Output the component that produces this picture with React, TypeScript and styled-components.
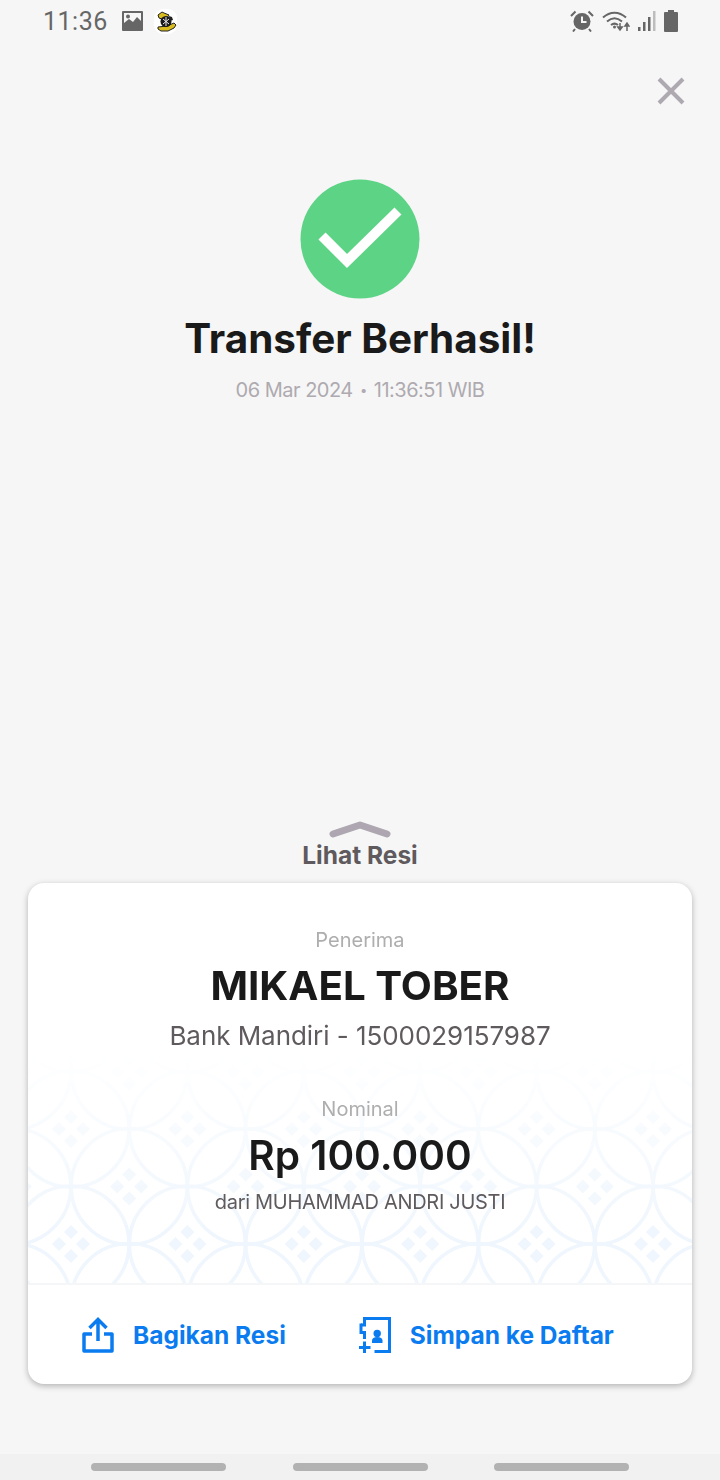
import React from 'react';
import styled, { createGlobalStyle } from 'styled-components';

const GlobalStyle = createGlobalStyle`
  html, body {
    margin: 0;
    padding: 0;
    background: #f6f6f6;
  }
  * {
    box-sizing: border-box;
  }
`;

const FONT = `Inter, "Liberation Sans", sans-serif`;

const Page = styled.div`
  width: 720px;
  height: 1480px;
  display: flex;
  flex-direction: column;
  background: #f6f6f6;
  font-family: ${FONT};
  overflow: hidden;
`;

const StatusBar = styled.div`
  height: 42px;
  flex: none;
  display: flex;
  align-items: center;
  justify-content: space-between;
  padding: 0 42px 0 43px;
`;

const StatusGroup = styled.div<{ $gap: number }>`
  display: flex;
  align-items: center;
  gap: ${(p) => p.$gap}px;
`;

const Clock = styled.span`
  font-family: Roboto, sans-serif;
  font-size: 25px;
  letter-spacing: 0.5px;
  color: #666666;
  margin-right: 3px;
`;

const CloseRow = styled.div`
  flex: none;
  display: flex;
  justify-content: flex-end;
  padding: 34px 34px 0 0;
`;

const Hero = styled.div`
  flex: none;
  display: flex;
  flex-direction: column;
  align-items: center;
  padding-top: 73px;
`;

const Title = styled.h1`
  margin: 16px 0 0;
  font-size: 40.400px;
  line-height: 48px;
  font-weight: 700;
  color: #1a1a1a;
`;

const DateLine = styled.div`
  margin-top: 14px;
  font-size: 20px;
  line-height: 26px;
  letter-spacing: -0.5px;
  color: #aeaab0;
`;

const DateDot = styled.span`
  font-size: 13px;
  vertical-align: 2px;
  margin: 0 2px;
`;

const Spacer = styled.div`
  flex: 1;
`;

const Drawer = styled.div`
  flex: none;
  display: flex;
  flex-direction: column;
  align-items: center;
`;

const DrawerLabel = styled.div`
  margin-top: 1px;
  font-size: 24.500px;
  line-height: 30px;
  font-weight: 700;
  color: #5f5a5d;
`;

const Card = styled.div`
  margin: 13px 28px 70px;
  width: 664px;
  height: 501px;
  display: flex;
  flex-direction: column;
  background: #ffffff;
  border-radius: 16px;
  box-shadow: 0 2px 6px rgba(0, 0, 0, 0.28);
  overflow: hidden;
`;

const CardBody = styled.div`
  position: relative;
  height: 402px;
  flex: none;
  display: flex;
  flex-direction: column;
  align-items: center;
  padding-top: 44px;
  border-bottom: 2px solid #f5f6f7;
`;

const Pattern = styled.svg`
  position: absolute;
  left: 0;
  bottom: 0;
`;

const Content = styled.div`
  position: relative;
  display: flex;
  flex-direction: column;
  align-items: center;
`;

const Caption = styled.div<{ $top?: number }>`
  margin-top: ${(p) => p.$top ?? 0}px;
  font-size: 20px;
  line-height: 26px;
  color: #aeaeae;
`;

const Name = styled.div`
  margin-top: 9px;
  font-size: 40.300px;
  line-height: 48px;
  font-weight: 700;
  color: #1a1a1a;
`;

const Account = styled.div`
  margin-top: 9px;
  font-size: 26px;
  line-height: 34px;
  letter-spacing: -0.05px;
  color: #5f5a5d;
`;

const Amount = styled.div`
  margin-top: 11px;
  font-size: 40.500px;
  line-height: 46px;
  font-weight: 600;
  color: #1a1a1a;
`;

const Sender = styled.div`
  margin-top: 10px;
  font-size: 20px;
  line-height: 26px;
  letter-spacing: -0.3px;
  color: #5f5a5d;
`;

const Actions = styled.div`
  flex: 1;
  display: flex;
  align-items: center;
  padding-left: 54px;
  gap: 73px;
`;

const Action = styled.div`
  display: flex;
  align-items: center;
  gap: 19px;
  font-size: 24.500px;
  font-weight: 700;
  color: #0a7cf0;
`;

const NavBar = styled.div`
  height: 26px;
  flex: none;
  display: flex;
  justify-content: space-between;
  align-items: flex-start;
  padding: 9px 91px 0;
  background: #f1f1f1;
`;

const NavPill = styled.div`
  width: 135px;
  height: 8px;
  border-radius: 4px;
  background: #b2b2b2;
`;

const GalleryIcon = () => (
  <svg width="21" height="20" viewBox="0 0 21 20">
    <path
      fill="#666"
      fillRule="evenodd"
      d="M1 0h19a1 1 0 0 1 1 1v18a1 1 0 0 1-1 1H1a1 1 0 0 1-1-1V1a1 1 0 0 1 1-1zm1 2v10l5-4 4 3 4-5 4 4V2H2zm4 1.500a2 2 0 1 1 0 4 2 2 0 0 1 0-4z"
    />
  </svg>
);

const AppIcon = () => (
  <svg width="23" height="25" viewBox="0 0 23 25">
    <rect width="23" height="25" rx="9" fill="#fff" />
    <path d="M4 18l9-1 7-3 2 2-2 3-6 3H7l-3-2z" fill="#d9bc1e" stroke="#222" strokeWidth="1" />
    <path d="M4 6l4-3 2 1 5 2-2 3-5 1-3-1z" fill="#d9bc1e" stroke="#222" strokeWidth="1" />
    <circle cx="12" cy="12.500" r="5.500" fill="#1a1a1a" />
    <path d="M9 10l6 5M15 10l-6 5M12 8v9" stroke="#e8e8e8" strokeWidth="1" fill="none" />
    <path d="M15 7l3 1 1 3-3 1z" fill="#222" />
  </svg>
);

const AlarmIcon = () => (
  <svg width="24" height="22" viewBox="0 0 24 22">
    <circle cx="12" cy="11.500" r="8.500" fill="#666" />
    <path d="M12 6.500v5.500h4.500" fill="none" stroke="#f6f6f6" strokeWidth="2" />
    <path d="M1 6l4.500-4.500M23 6l-4.500-4.500M5 19l-2 2.500M19 19l2 2.500" stroke="#666" strokeWidth="2" />
  </svg>
);

const WifiIcon = () => (
  <svg width="28" height="22" viewBox="0 0 28 22">
    <g fill="none" stroke="#666" strokeWidth="2">
      <path d="M1 7.500c7-6.500 16-6.500 23 0" />
      <path d="M5 11.500c4.800-4.200 10.200-4.200 15 0" />
      <path d="M9 15c2.500-2 4.500-2 7 0" />
    </g>
    <circle cx="12.500" cy="17" r="1.500" fill="#666" />
    <path d="M18 13v6M15.800 17l2.200 3 2.200-3z" stroke="#666" strokeWidth="1.500" fill="#666" />
    <path d="M25 21v-7M23 16l2-3 2 3z" stroke="#666" strokeWidth="1.500" fill="#666" />
  </svg>
);

const SignalIcon = () => (
  <svg width="18" height="20" viewBox="0 0 18 20">
    <rect x="0" y="16" width="2.500" height="4" fill="#666" />
    <rect x="5" y="11" width="2.500" height="9" fill="#666" />
    <rect x="10" y="6" width="2.500" height="14" fill="#666" />
    <rect x="15" y="0" width="2.500" height="20" fill="#bdbdbd" />
  </svg>
);

const BatteryIcon = () => (
  <svg width="14" height="22" viewBox="0 0 14 22">
    <path d="M4 0h6v2h3a1 1 0 0 1 1 1v18a1 1 0 0 1-1 1H1a1 1 0 0 1-1-1V3a1 1 0 0 1 1-1h3z" fill="#666" />
  </svg>
);

const CloseIcon = () => (
  <svg width="30" height="30" viewBox="0 0 30 30">
    <path d="M3 3l24 24M27 3L3 27" stroke="#aea8b0" strokeWidth="4" fill="none" />
  </svg>
);

const SuccessIcon = () => (
  <svg width="120" height="120" viewBox="0 0 120 120">
    <circle cx="60" cy="60" r="59.500" fill="#5dd385" />
    <path d="M22 57l25 25 51-50" fill="none" stroke="#fff" strokeWidth="10" />
  </svg>
);

const ChevronUp = () => (
  <svg width="62" height="18" viewBox="0 0 62 18">
    <path d="M4 13L31 4l27 9" fill="none" stroke="#aea6b0" strokeWidth="7" strokeLinecap="round" strokeLinejoin="round" />
  </svg>
);

const ShareIcon = () => (
  <svg width="32" height="36" viewBox="0 0 32 36">
    <g fill="none" stroke="#0a7cf0" strokeWidth="3.500">
      <path d="M16 24V3M7.500 11L16 2.500 24.500 11" />
      <path d="M10 17H2v17h28V17h-8" strokeLinejoin="round" />
    </g>
  </svg>
);

const ContactIcon = () => (
  <svg width="32" height="36" viewBox="0 0 32 36">
    <g fill="none" stroke="#0a7cf0" strokeWidth="3">
      <path d="M2 8H5.500V1.500H30.500V34.500H15.500" />
      <path d="M2 6.500V15.500H5.500V22" />
      <path d="M0 30.500h11.500M5.500 24.500v11.500" />
    </g>
    <circle cx="18.200" cy="16.500" r="3.700" fill="#0a7cf0" />
    <path d="M13 26v-2.500c0-2 2-3.500 5.200-3.500s5.300 1.500 5.300 3.500V26z" fill="#0a7cf0" />
  </svg>
);

// motif kawung: satu lingkaran + empat belah ketupat kecil di tengah
const KawungCell = ({ cx, cy }: { cx: number; cy: number }) => (
  <g>
    <circle cx={cx} cy={cy} r={58} fill="none" stroke="#eff6fd" strokeWidth="3.500" />
    {[
      [0, -12],
      [12, 0],
      [0, 12],
      [-12, 0],
    ].map(([dx, dy]) => (
      <rect
        key={`${dx}-${dy}`}
        x={cx + dx - 5}
        y={cy + dy - 5}
        width="10"
        height="10"
        fill="#eff6fd"
        transform={`rotate(45 ${cx + dx} ${cy + dy})`}
      />
    ))}
  </g>
);

const KAWUNG_COLS = Array.from({ length: 14 }, (_, i) => i);
const KAWUNG_ROWS = Array.from({ length: 6 }, (_, i) => i);

const KawungPattern = () => (
  <Pattern width="664" height="240" viewBox="0 0 664 240">
    <defs>
      <linearGradient id="kawungFade" x1="0" y1="0" x2="0" y2="1">
        <stop offset="0.04" stopColor="#fff" stopOpacity="0" />
        <stop offset="0.8" stopColor="#fff" stopOpacity="1" />
      </linearGradient>
      <mask id="kawungMask">
        <rect width="664" height="240" fill="url(#kawungFade)" />
      </mask>
    </defs>
    <g mask="url(#kawungMask)">
      {KAWUNG_ROWS.map((r) =>
        KAWUNG_COLS.map((c) =>
          (r + c) % 2 === 0 ? (
            <KawungCell key={`${r}-${c}`} cx={43 + (c - 2) * 58.200} cy={86 + (r - 2) * 57.500} />
          ) : null,
        ),
      )}
    </g>
  </Pattern>
);

export default function App() {
  return (
    <Page>
      <GlobalStyle />
      <StatusBar>
        <StatusGroup $gap={11}>
          <Clock>11:36</Clock>
          <GalleryIcon />
          <AppIcon />
        </StatusGroup>
        <StatusGroup $gap={8}>
          <AlarmIcon />
          <WifiIcon />
          <SignalIcon />
          <BatteryIcon />
        </StatusGroup>
      </StatusBar>
      <CloseRow>
        <CloseIcon />
      </CloseRow>
      <Hero>
        <SuccessIcon />
        <Title>Transfer Berhasil!</Title>
        <DateLine>
          06 Mar 2024 <DateDot>•</DateDot> 11:36:51 WIB
        </DateLine>
      </Hero>
      <Spacer />
      <Drawer>
        <ChevronUp />
        <DrawerLabel>Lihat Resi</DrawerLabel>
        <Card>
          <CardBody>
            <KawungPattern />
            <Content>
              <Caption>Penerima</Caption>
              <Name>MIKAEL TOBER</Name>
              <Account>Bank Mandiri - 1500029157987</Account>
              <Caption $top={43}>Nominal</Caption>
              <Amount>Rp 100.000</Amount>
              <Sender>dari MUHAMMAD ANDRI JUSTI</Sender>
            </Content>
          </CardBody>
          <Actions>
            <Action>
              <ShareIcon />
              Bagikan Resi
            </Action>
            <Action>
              <ContactIcon />
              Simpan ke Daftar
            </Action>
          </Actions>
        </Card>
      </Drawer>
      <NavBar>
        <NavPill />
        <NavPill />
        <NavPill />
      </NavBar>
    </Page>
  );
}
